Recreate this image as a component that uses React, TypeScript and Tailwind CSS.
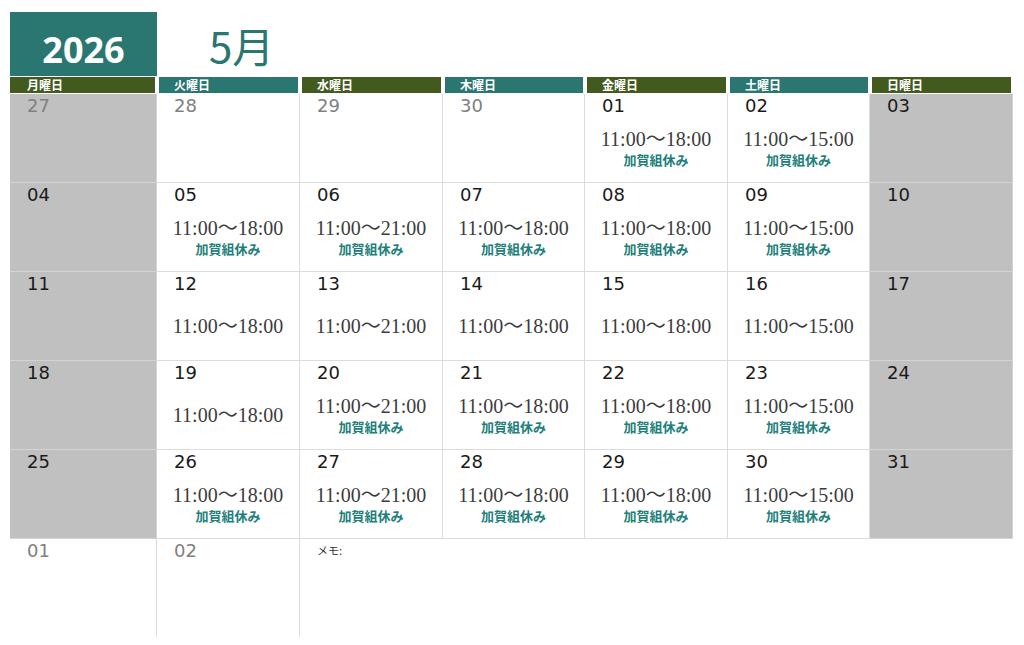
import React from "react";

type Cell = {
  d: string;
  other?: boolean;
  gray?: boolean;
  time?: string;
  kaga?: boolean;
};

const rows: Cell[][] = [
  [
    { d: "27", other: true, gray: true },
    { d: "28", other: true },
    { d: "29", other: true },
    { d: "30", other: true },
    { d: "01", time: "11:00〜18:00", kaga: true },
    { d: "02", time: "11:00〜15:00", kaga: true },
    { d: "03", gray: true },
  ],
  [
    { d: "04", gray: true },
    { d: "05", time: "11:00〜18:00", kaga: true },
    { d: "06", time: "11:00〜21:00", kaga: true },
    { d: "07", time: "11:00〜18:00", kaga: true },
    { d: "08", time: "11:00〜18:00", kaga: true },
    { d: "09", time: "11:00〜15:00", kaga: true },
    { d: "10", gray: true },
  ],
  [
    { d: "11", gray: true },
    { d: "12", time: "11:00〜18:00" },
    { d: "13", time: "11:00〜21:00" },
    { d: "14", time: "11:00〜18:00" },
    { d: "15", time: "11:00〜18:00" },
    { d: "16", time: "11:00〜15:00" },
    { d: "17", gray: true },
  ],
  [
    { d: "18", gray: true },
    { d: "19", time: "11:00〜18:00" },
    { d: "20", time: "11:00〜21:00", kaga: true },
    { d: "21", time: "11:00〜18:00", kaga: true },
    { d: "22", time: "11:00〜18:00", kaga: true },
    { d: "23", time: "11:00〜15:00", kaga: true },
    { d: "24", gray: true },
  ],
  [
    { d: "25", gray: true },
    { d: "26", time: "11:00〜18:00", kaga: true },
    { d: "27", time: "11:00〜21:00", kaga: true },
    { d: "28", time: "11:00〜18:00", kaga: true },
    { d: "29", time: "11:00〜18:00", kaga: true },
    { d: "30", time: "11:00〜15:00", kaga: true },
    { d: "31", gray: true },
  ],
];

const headers = [
  { t: "月曜日", c: "bg-[#435a1e]" },
  { t: "火曜日", c: "bg-[#2a7670]" },
  { t: "水曜日", c: "bg-[#435a1e]" },
  { t: "木曜日", c: "bg-[#2a7670]" },
  { t: "金曜日", c: "bg-[#435a1e]" },
  { t: "土曜日", c: "bg-[#2a7670]" },
  { t: "日曜日", c: "bg-[#435a1e]" },
];

const cols = "grid grid-cols-[147px_143px_143px_142px_143px_142px_143px]";
const jp = "font-['Noto_Sans_CJK_JP',sans-serif]";

function DayCell({ c }: { c: Cell }) {
  return (
    <div
      className={`flex h-[89px] flex-col border-b border-r ${
        c.gray ? "border-[#d4d4d4] bg-[#c0c0c0]" : "border-[#dcdcdc] bg-white"
      }`}
    >
      <div
        className={`pl-[17px] pt-[1px] text-[18px] leading-[21px] font-['DejaVu_Sans',sans-serif] ${
          c.other ? "text-[#808080]" : "text-[#1a1a1a]"
        }`}
      >
        {c.d}
      </div>
      {c.time && (
        <div className="flex flex-1 flex-col items-center justify-center pb-[3px]">
          <div className="text-[20px] leading-[24px] text-[#3c3c3c] font-['Liberation_Serif','Noto_Sans_CJK_JP',serif]">
            {c.time}
          </div>
          {c.kaga && (
            <div className={`text-[13px] font-bold leading-[18px] text-[#22807a] ${jp}`}>
              加賀組休み
            </div>
          )}
        </div>
      )}
    </div>
  );
}

export default function App() {
  return (
    <div className="h-[645px] w-[1024px] overflow-hidden bg-white pl-[10px] pt-[12px]">
      <div className="flex">
        <div className="flex h-[64px] w-[147px] justify-center bg-[#2a7670] pt-[20px]">
          <span className="text-[36px] font-bold leading-[36px] text-white font-['Open_Sans',sans-serif]">
            2026
          </span>
        </div>
        <div className={`ml-[52px] mt-[12px] text-[42px] leading-[42px] text-[#2a7670] ${jp}`}>
          5月
        </div>
      </div>
      <div className={`${cols} mt-[1px] mb-[1px]`}>
        {headers.map((h, i) => (
          <div
            key={h.t}
            className={`${h.c} h-[16px] ${i === 0 ? "mr-[2px] pl-[17px]" : "mx-[2px] pl-[15px]"} text-[12px] font-bold leading-[16px] text-white ${jp}`}
          >
            {h.t}
          </div>
        ))}
      </div>
      <div className={cols}>
        {rows.map((r, ri) => r.map((c, ci) => <DayCell key={`${ri}-${ci}`} c={c} />))}
        <div className="h-[98px] border-r border-[#dcdcdc] pl-[17px] pt-[1px] text-[18px] leading-[21px] text-[#808080] font-['DejaVu_Sans',sans-serif]">
          01
        </div>
        <div className="h-[98px] border-r border-[#dcdcdc] pl-[17px] pt-[1px] text-[18px] leading-[21px] text-[#808080] font-['DejaVu_Sans',sans-serif]">
          02
        </div>
        <div className={`col-span-5 pl-[17px] pt-[4px] text-[11px] leading-[14px] text-[#333] ${jp}`}>
          メモ:
        </div>
      </div>
    </div>
  );
}
